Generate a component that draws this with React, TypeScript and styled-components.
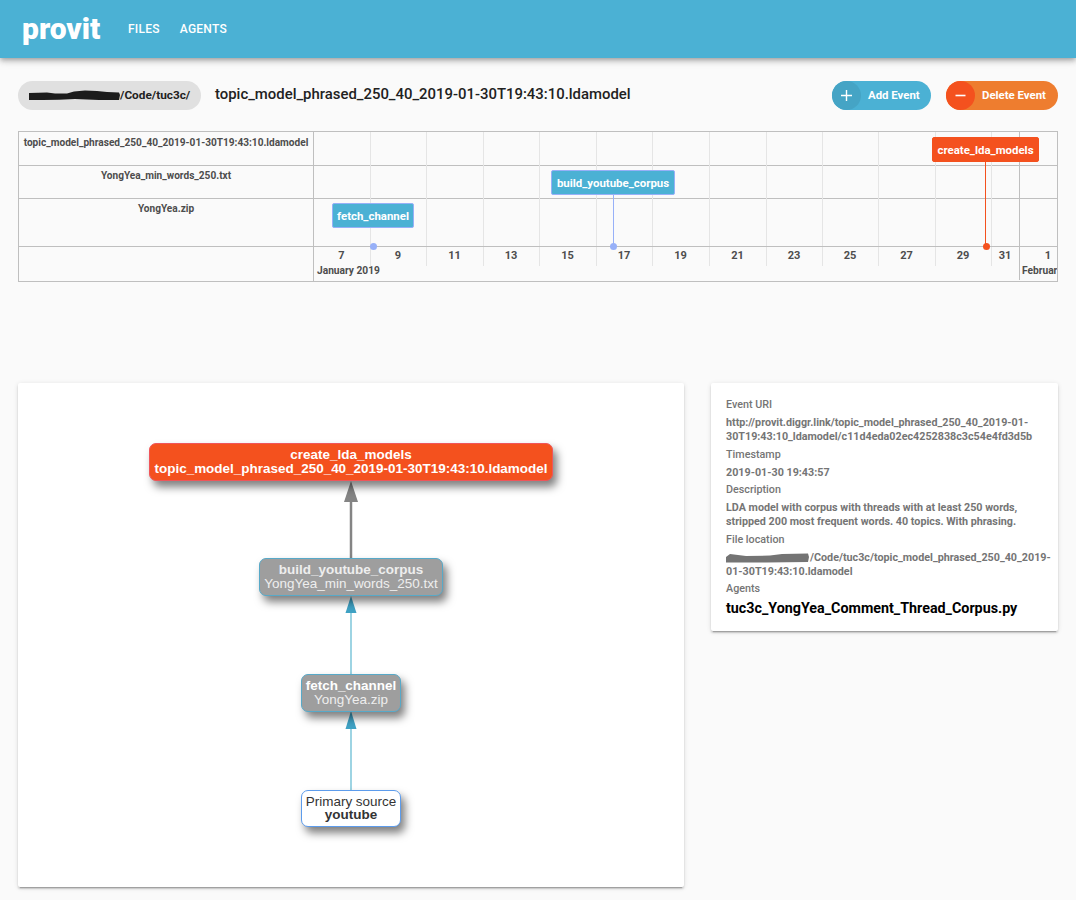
import React from "react";
import styled, { createGlobalStyle, css } from "styled-components";

const BLUE = "#4bb1d4";
const DARKBLUE = "#45a4c5";
const RED = "#f4511e";
const ORANGE = "#ee7d2f";
const LINE = "#bfbfbf";
const MINOR = "#e5e5e5";
const ROBOTO = `Roboto, "Liberation Sans", sans-serif`;

const Global = createGlobalStyle`
  html, body { margin: 0; padding: 0; background: #fafafa; }
  body { font-family: ${ROBOTO}; width: 1076px; height: 900px; overflow: hidden; }
  * { box-sizing: border-box; }
`;

const Page = styled.div`
  display: flex;
  flex-direction: column;
  height: 900px;
`;

const AppBar = styled.header`
  height: 58px;
  background: ${BLUE};
  display: flex;
  align-items: center;
  padding-left: 22px;
  color: #fff;
  box-shadow: 0 2px 4px -1px rgba(0,0,0,.2), 0 4px 5px 0 rgba(0,0,0,.14), 0 1px 10px 0 rgba(0,0,0,.12);
`;

const Logo = styled.div`
  font-size: 30px;
  font-weight: 900;
  line-height: 1;
  width: 106px;
  margin-top: -1px;
`;

const NavLink = styled.a`
  font-size: 12px;
  font-weight: 500;
  letter-spacing: 0.25px;
  margin-right: 20px;
  color: #fff;
`;

const Toolbar = styled.div`
  display: flex;
  align-items: center;
  height: 29px;
  margin: 23px 18px 0;
`;

const PathChip = styled.div`
  width: 183px;
  height: 29px;
  border-radius: 15px;
  background: #e0e0e0;
  display: flex;
  align-items: center;
  padding: 0 0 1px 11px;
  font-size: 11.8px;
  font-weight: 700;
  color: #222;
`;

const RedactionMark = styled.svg`
  flex: none;
  display: inline-block;
  vertical-align: -2px;
`;

const FileTitle = styled.h1`
  flex: 1;
  margin: -3px 0 0 14px;
  font-size: 14.9px;
  font-weight: 500;
  color: #212121;
`;

const ActionChip = styled.button<{ $bg: string; $w: number }>`
  width: ${(p) => p.$w}px;
  height: 29px;
  margin-left: 15px;
  padding: 0;
  border: 0;
  border-radius: 15px;
  background: ${(p) => p.$bg};
  color: #fff;
  display: flex;
  align-items: center;
  font-family: ${ROBOTO};
  font-size: 11.4px;
  font-weight: 700;
`;

const ChipText = styled.span`
  margin-top: -2px;
`;

const ChipIcon = styled.span<{ $bg: string }>`
  width: 29px;
  height: 29px;
  border-radius: 50%;
  background: ${(p) => p.$bg};
  display: flex;
  align-items: center;
  justify-content: center;
  margin-right: 7px;
  flex: none;
`;

const Timeline = styled.section`
  position: relative;
  margin: 21px 18px 0;
  height: 151px;
  border: 1px solid ${LINE};
`;

const Row = styled.div<{ $h: number }>`
  display: grid;
  grid-template-columns: 295px 1fr;
  height: ${(p) => p.$h}px;
  border-bottom: 1px solid ${LINE};
`;

const RowLabel = styled.div<{ $pt: number }>`
  border-right: 1px solid ${LINE};
  text-align: center;
  font-size: 10.1px;
  font-weight: 700;
  line-height: 12px;
  padding-top: ${(p) => p.$pt}px;
  color: #4d4d4d;
  white-space: nowrap;
`;

const AxisBlock = styled.div`
  display: grid;
  grid-template-columns: 295px 1fr;
  height: 34px;
`;

const AxisLabel = styled.div`
  border-right: 1px solid ${LINE};
`;

const AxisPane = styled.div`
  overflow: hidden;
  display: flex;
  flex-direction: column;
`;

const Days = styled.div`
  display: flex;
  height: 19px;
  flex: none;
`;

const Day = styled.div<{ $w: number; $major?: boolean; $open?: boolean }>`
  flex: none;
  width: ${(p) => p.$w}px;
  ${(p) => !p.$open && css`
    border-right: 1px solid ${p.$major ? LINE : MINOR};
    padding-right: 1px;
  `}
  text-align: center;
  font-size: 11px;
  font-weight: 700;
  line-height: 16px;
  padding-top: 1px;
  color: #4d4d4d;
`;

const Months = styled.div`
  display: flex;
  height: 15px;
`;

const Month = styled.div<{ $w: number; $major?: boolean; $pl: number }>`
  flex: none;
  width: ${(p) => p.$w}px;
  height: 14px;
  ${(p) => p.$major && css`border-right: 1px solid ${LINE};`}
  font-size: 10.2px;
  font-weight: 700;
  line-height: 9px;
  padding-left: ${(p) => p.$pl}px;
  color: #4d4d4d;
  white-space: nowrap;
`;

/* Free canvas of the timeline: gridlines, events and dots sit at date positions */
const TrackCanvas = styled.div`
  position: absolute;
  left: 295px;
  right: 0;
  top: 0;
  height: 114px;
`;

const GridLine = styled.div<{ $major?: boolean }>`
  position: absolute;
  top: 0;
  bottom: 0;
  width: 1px;
  background: ${(p) => (p.$major ? LINE : MINOR)};
`;

const EventBox = styled.div<{ $x: number; $y: number; $w: number; $h: number; $red?: boolean }>`
  position: absolute;
  left: ${(p) => p.$x}px;
  top: ${(p) => p.$y}px;
  width: ${(p) => p.$w}px;
  height: ${(p) => p.$h}px;
  background: ${(p) => (p.$red ? RED : BLUE)};
  border: 1px solid ${(p) => (p.$red ? RED : "#97b0f8")};
  border-radius: 2px;
  color: #fff;
  font-size: 11.45px;
  font-weight: 700;
  display: flex;
  align-items: center;
  justify-content: center;
`;

const Stem = styled.div<{ $x: number; $y: number; $h: number; $red?: boolean }>`
  position: absolute;
  left: ${(p) => p.$x}px;
  top: ${(p) => p.$y}px;
  width: 1px;
  height: ${(p) => p.$h}px;
  background: ${(p) => (p.$red ? RED : "#97b0f8")};
`;

const Dot = styled.div<{ $x: number; $red?: boolean }>`
  position: absolute;
  left: ${(p) => p.$x}px;
  top: 111px;
  width: 7px;
  height: 7px;
  border-radius: 50%;
  background: ${(p) => (p.$red ? RED : "#97b0f8")};
`;

const Panels = styled.div`
  display: flex;
  align-items: flex-start;
  gap: 27px;
  margin: 101px 18px 0;
`;

const Card = styled.div`
  background: #fff;
  border-radius: 2px;
  box-shadow: 0 3px 1px -2px rgba(0,0,0,.2), 0 2px 2px 0 rgba(0,0,0,.14), 0 1px 5px 0 rgba(0,0,0,.12);
`;

const GraphCard = styled(Card)`
  position: relative;
  width: 666px;
  height: 504px;
  flex: none;
`;

const EdgeLayer = styled.svg`
  position: absolute;
  inset: 0;
`;

type NodeKind = "red" | "gray" | "white";

const GraphNode = styled.div<{ $x: number; $y: number; $w: number; $kind: NodeKind }>`
  position: absolute;
  left: ${(p) => p.$x}px;
  top: ${(p) => p.$y}px;
  width: ${(p) => p.$w}px;
  height: 37.5px;
  border-radius: 7px;
  border: 1.5px solid
    ${(p) => (p.$kind === "red" ? "#f0555a" : p.$kind === "gray" ? "#57a9c8" : "#5d9cec")};
  background: ${(p) => (p.$kind === "red" ? RED : p.$kind === "gray" ? "#9e9e9e" : "#fff")};
  color: ${(p) => (p.$kind === "white" ? "#333" : "#fff")};
  box-shadow: 4px 6px 8px rgba(0,0,0,.5);
  display: flex;
  flex-direction: column;
  align-items: center;
  justify-content: center;
  font-family: "Liberation Sans", Arial, sans-serif;
  font-size: 13.47px;
  line-height: 13.3px;
  white-space: nowrap;
`;

const NodeLine = styled.div<{ $bold?: boolean; $soft?: boolean }>`
  font-weight: ${(p) => (p.$bold ? 700 : 400)};
  ${(p) => p.$soft && css`color: #eeeeee;`}
`;

const InfoCard = styled(Card)`
  width: 347px;
  height: 248px;
  flex: none;
  padding: 15px 5px 0 15px;
  color: #757575;
`;

const InfoKey = styled.div`
  font-size: 10.75px;
  font-weight: 500;
  line-height: 14px;
  height: 18px;
`;

const InfoValue = styled.div`
  font-size: 10.75px;
  font-weight: 700;
  line-height: 14px;
  margin-bottom: 3.5px;
`;

const AgentName = styled.div`
  font-size: 14.3px;
  font-weight: 700;
  line-height: 16px;
  color: #000;
`;

const gridXs = [56, 112, 169, 225, 282, 338, 395, 452, 508, 564, 621, 677];
const dayLabels = ["7", "9", "11", "13", "15", "17", "19", "21", "23", "25", "27", "29"];
const days = dayLabels.map((label, i) => ({
  label,
  width: gridXs[i] + 1 - (i === 0 ? 0 : gridXs[i - 1] + 1),
}));

const events = [
  { label: "fetch_channel", x: 18, y: 71, w: 82, h: 25 },
  { label: "build_youtube_corpus", x: 237, y: 38, w: 124, h: 25 },
  { label: "create_lda_models", x: 618, y: 5, w: 107, h: 25, red: true },
];

const Plus = () => (
  <svg width="13" height="13" viewBox="0 0 13 13">
    <path d="M6.500 1v11M1 6.500h11" stroke="#fff" strokeWidth="1.4" fill="none" />
  </svg>
);

const Minus = () => (
  <svg width="13" height="13" viewBox="0 0 13 13">
    <path d="M1.500 6.500h10" stroke="#fff" strokeWidth="1.6" fill="none" />
  </svg>
);

export default function App() {
  return (
    <Page>
      <Global />
      <AppBar>
        <Logo>provit</Logo>
        <NavLink>FILES</NavLink>
        <NavLink>AGENTS</NavLink>
      </AppBar>

      <Toolbar>
        <PathChip>
          <RedactionMark width="91" height="11" viewBox="0 0 91 11">
            <path
              d="M0 3 L18 2.500 L26 3.500 L38 3.500 L45 1.500 L56 .5 L68 1 L78 2 L90 2.500 L91 5 L90 10 L70 10 L58 9.500 L46 9 L30 9.800 L14 10 L0 10Z"
              fill="#1c1c1c"
            />
          </RedactionMark>
          /Code/tuc3c/
        </PathChip>
        <FileTitle>topic_model_phrased_250_40_2019-01-30T19:43:10.ldamodel</FileTitle>
        <ActionChip $bg={BLUE} $w={99}>
          <ChipIcon $bg={DARKBLUE}><Plus /></ChipIcon>
          <ChipText>Add Event</ChipText>
        </ActionChip>
        <ActionChip $bg={ORANGE} $w={112}>
          <ChipIcon $bg={RED}><Minus /></ChipIcon>
          <ChipText>Delete Event</ChipText>
        </ActionChip>
      </Toolbar>

      <Timeline>
        <Row $h={34}>
          <RowLabel $pt={5}>topic_model_phrased_250_40_2019-01-30T19:43:10.ldamodel</RowLabel>
        </Row>
        <Row $h={33}>
          <RowLabel $pt={4}>YongYea_min_words_250.txt</RowLabel>
        </Row>
        <Row $h={48}>
          <RowLabel $pt={4}>YongYea.zip</RowLabel>
        </Row>
        <AxisBlock>
          <AxisLabel />
          <AxisPane>
            <Days>
              {days.map((d) => (
                <Day key={d.label} $w={d.width}>{d.label}</Day>
              ))}
              <Day $w={28} $major>31</Day>
              <Day $w={56} $open>1</Day>
            </Days>
            <Months>
              <Month $w={706} $major $pl={3}>January 2019</Month>
              <Month $w={80} $pl={2}>February 2019</Month>
            </Months>
          </AxisPane>
        </AxisBlock>

        <TrackCanvas>
          {gridXs.map((x) => (
            <GridLine key={x} style={{ left: x }} />
          ))}
          <GridLine $major style={{ left: 705 }} />
          <Stem $x={299} $y={62} $h={52} />
          <Stem $x={671} $y={30} $h={84} $red />
          {events.map((e) => (
            <EventBox key={e.label} $x={e.x} $y={e.y} $w={e.w} $h={e.h} $red={e.red}>
              {e.label}
            </EventBox>
          ))}
          <Dot $x={56} />
          <Dot $x={296} />
          <Dot $x={669} $red />
        </TrackCanvas>
      </Timeline>

      <Panels>
        <GraphCard>
          <EdgeLayer width="666" height="504" viewBox="0 0 666 504">
            <path d="M333 118V176" stroke="#848484" strokeWidth="2.5" fill="none" />
            <path d="M333 98l-7 21h14z" fill="#848484" />
            <path d="M333 228V291" stroke="#93d0e0" strokeWidth="1.8" fill="none" />
            <path d="M333 213l-5.500 17h11z" fill="#3fa2c4" />
            <path d="M333 344V407" stroke="#93d0e0" strokeWidth="1.8" fill="none" />
            <path d="M333 328l-5.500 18h11z" fill="#3fa2c4" />
          </EdgeLayer>
          <GraphNode $x={131} $y={60} $w={404} $kind="red">
            <NodeLine $bold>create_lda_models</NodeLine>
            <NodeLine $bold>topic_model_phrased_250_40_2019-01-30T19:43:10.ldamodel</NodeLine>
          </GraphNode>
          <GraphNode $x={241} $y={175} $w={184} $kind="gray">
            <NodeLine $bold $soft>build_youtube_corpus</NodeLine>
            <NodeLine $soft>YongYea_min_words_250.txt</NodeLine>
          </GraphNode>
          <GraphNode $x={283} $y={291} $w={100} $kind="gray">
            <NodeLine $bold>fetch_channel</NodeLine>
            <NodeLine $soft>YongYea.zip</NodeLine>
          </GraphNode>
          <GraphNode $x={283} $y={406.5} $w={100} $kind="white">
            <NodeLine>Primary source</NodeLine>
            <NodeLine $bold>youtube</NodeLine>
          </GraphNode>
        </GraphCard>

        <InfoCard>
          <InfoKey>Event URI</InfoKey>
          <InfoValue>
            http://provit.diggr.link/topic_model_phrased_250_40_2019-01-30T19:43:10_ldamodel/c11d4eda02ec4252838c3c54e4fd3d5b
          </InfoValue>
          <InfoKey>Timestamp</InfoKey>
          <InfoValue>2019-01-30 19:43:57</InfoValue>
          <InfoKey>Description</InfoKey>
          <InfoValue>
            LDA model with corpus with threads with at least 250 words, stripped 200 most frequent words. 40 topics. With phrasing.
          </InfoValue>
          <InfoKey>File location</InfoKey>
          <InfoValue>
            <RedactionMark width="84" height="10" viewBox="0 0 84 10">
              <path
                d="M0 4 L4 1 L20 3 L44 2.500 L56 1 L82 .5 L83 4 L82 9 L40 9.500 L0 9.500Z"
                fill="#747474"
              />
            </RedactionMark>
            /Code/tuc3c/topic_model_phrased_250_40_2019-01-30T19:43:10.ldamodel
          </InfoValue>
          <InfoKey>Agents</InfoKey>
          <AgentName>tuc3c_YongYea_Comment_Thread_Corpus.py</AgentName>
        </InfoCard>
      </Panels>
    </Page>
  );
}
